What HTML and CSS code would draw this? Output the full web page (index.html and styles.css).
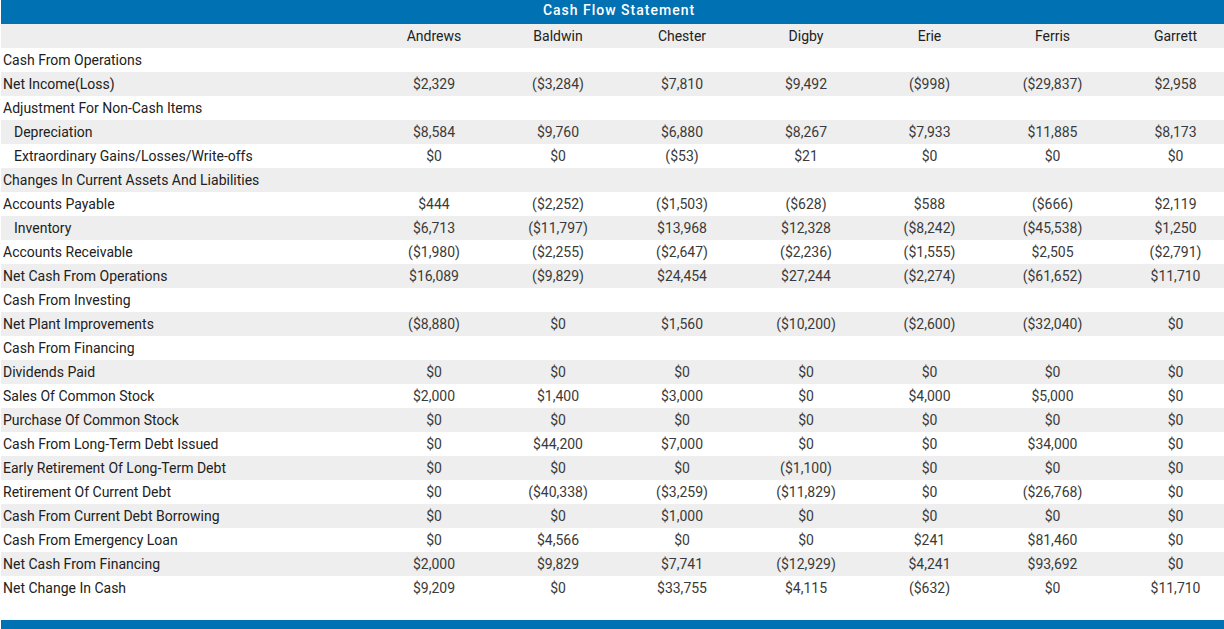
FILE: index.html
```html
<!DOCTYPE html>
<html lang="en">
<head>
<meta charset="utf-8">
<title>Cash Flow Statement</title>
<link rel="stylesheet" href="styles.css">
</head>
<body>
<div class="report">
  <div class="title">Cash Flow Statement</div>
  <table class="cf">
    <colgroup>
      <col class="c-label"><col class="c-wide"><col class="c-wide"><col class="c-wide"><col class="c-wide"><col class="c-narrow"><col class="c-narrow"><col class="c-narrow">
    </colgroup>
    <thead>
      <tr><th></th><th>Andrews</th><th>Baldwin</th><th>Chester</th><th>Digby</th><th>Erie</th><th>Ferris</th><th>Garrett</th></tr>
    </thead>
    <tbody>
      <tr><td class="lbl">Cash From Operations</td><td></td><td></td><td></td><td></td><td></td><td></td><td></td></tr>
      <tr><td class="lbl">Net Income(Loss)</td><td>$2,329</td><td>($3,284)</td><td>$7,810</td><td>$9,492</td><td>($998)</td><td>($29,837)</td><td>$2,958</td></tr>
      <tr><td class="lbl">Adjustment For Non-Cash Items</td><td></td><td></td><td></td><td></td><td></td><td></td><td></td></tr>
      <tr><td class="lbl ind">Depreciation</td><td>$8,584</td><td>$9,760</td><td>$6,880</td><td>$8,267</td><td>$7,933</td><td>$11,885</td><td>$8,173</td></tr>
      <tr><td class="lbl ind">Extraordinary Gains/Losses/Write-offs</td><td>$0</td><td>$0</td><td>($53)</td><td>$21</td><td>$0</td><td>$0</td><td>$0</td></tr>
      <tr><td class="lbl">Changes In Current Assets And Liabilities</td><td></td><td></td><td></td><td></td><td></td><td></td><td></td></tr>
      <tr><td class="lbl">Accounts Payable</td><td>$444</td><td>($2,252)</td><td>($1,503)</td><td>($628)</td><td>$588</td><td>($666)</td><td>$2,119</td></tr>
      <tr><td class="lbl ind">Inventory</td><td>$6,713</td><td>($11,797)</td><td>$13,968</td><td>$12,328</td><td>($8,242)</td><td>($45,538)</td><td>$1,250</td></tr>
      <tr><td class="lbl">Accounts Receivable</td><td>($1,980)</td><td>($2,255)</td><td>($2,647)</td><td>($2,236)</td><td>($1,555)</td><td>$2,505</td><td>($2,791)</td></tr>
      <tr><td class="lbl">Net Cash From Operations</td><td>$16,089</td><td>($9,829)</td><td>$24,454</td><td>$27,244</td><td>($2,274)</td><td>($61,652)</td><td>$11,710</td></tr>
      <tr><td class="lbl">Cash From Investing</td><td></td><td></td><td></td><td></td><td></td><td></td><td></td></tr>
      <tr><td class="lbl">Net Plant Improvements</td><td>($8,880)</td><td>$0</td><td>$1,560</td><td>($10,200)</td><td>($2,600)</td><td>($32,040)</td><td>$0</td></tr>
      <tr><td class="lbl">Cash From Financing</td><td></td><td></td><td></td><td></td><td></td><td></td><td></td></tr>
      <tr><td class="lbl">Dividends Paid</td><td>$0</td><td>$0</td><td>$0</td><td>$0</td><td>$0</td><td>$0</td><td>$0</td></tr>
      <tr><td class="lbl">Sales Of Common Stock</td><td>$2,000</td><td>$1,400</td><td>$3,000</td><td>$0</td><td>$4,000</td><td>$5,000</td><td>$0</td></tr>
      <tr><td class="lbl">Purchase Of Common Stock</td><td>$0</td><td>$0</td><td>$0</td><td>$0</td><td>$0</td><td>$0</td><td>$0</td></tr>
      <tr><td class="lbl">Cash From Long-Term Debt Issued</td><td>$0</td><td>$44,200</td><td>$7,000</td><td>$0</td><td>$0</td><td>$34,000</td><td>$0</td></tr>
      <tr><td class="lbl">Early Retirement Of Long-Term Debt</td><td>$0</td><td>$0</td><td>$0</td><td>($1,100)</td><td>$0</td><td>$0</td><td>$0</td></tr>
      <tr><td class="lbl">Retirement Of Current Debt</td><td>$0</td><td>($40,338)</td><td>($3,259)</td><td>($11,829)</td><td>$0</td><td>($26,768)</td><td>$0</td></tr>
      <tr><td class="lbl">Cash From Current Debt Borrowing</td><td>$0</td><td>$0</td><td>$1,000</td><td>$0</td><td>$0</td><td>$0</td><td>$0</td></tr>
      <tr><td class="lbl">Cash From Emergency Loan</td><td>$0</td><td>$4,566</td><td>$0</td><td>$0</td><td>$241</td><td>$81,460</td><td>$0</td></tr>
      <tr><td class="lbl">Net Cash From Financing</td><td>$2,000</td><td>$9,829</td><td>$7,741</td><td>($12,929)</td><td>$4,241</td><td>$93,692</td><td>$0</td></tr>
      <tr><td class="lbl">Net Change In Cash</td><td>$9,209</td><td>$0</td><td>$33,755</td><td>$4,115</td><td>($632)</td><td>$0</td><td>$11,710</td></tr>
    </tbody>
  </table>
  <div class="footer-bar"></div>
</div>
</body>
</html>
```

FILE: styles.css
```css
html, body {
  margin: 0;
  padding: 0;
  overflow: hidden;
  background: #ffffff;
}

body {
  font-family: Roboto, "Liberation Sans", Arial, sans-serif;
  font-size: 14px;
  color: #212121;
}

.report {
  width: 1236px;
  margin-left: 1px;
}

.title {
  height: 24px;
  line-height: 20px;
  background: #0071b3;
  color: #ffffff;
  text-align: center;
  font-weight: 500;
  letter-spacing: 1px;
}

.cf {
  width: 1236px;
  table-layout: fixed;
  border-collapse: collapse;
  border-spacing: 0;
}

.c-label { width: 371px; }
.c-wide { width: 124px; }
.c-narrow { width: 123px; }

.cf th,
.cf td {
  height: 24px;
  box-sizing: border-box;
  padding: 1px 0 0 0;
  line-height: 23px;
  text-align: center;
  white-space: nowrap;
  font-weight: 400;
}

.cf th {
  color: #212121;
  background: #eeeeee;
}

.cf td {
  color: #3a3a3a;
}

.cf td.lbl {
  text-align: left;
  padding-left: 2px;
  color: #212121;
}

.cf td.ind {
  padding-left: 13px;
}

.cf tbody tr:nth-child(even) td {
  background: #eeeeee;
}

.footer-bar {
  margin-top: 20px;
  height: 10px;
  background: #0071b3;
}
```
